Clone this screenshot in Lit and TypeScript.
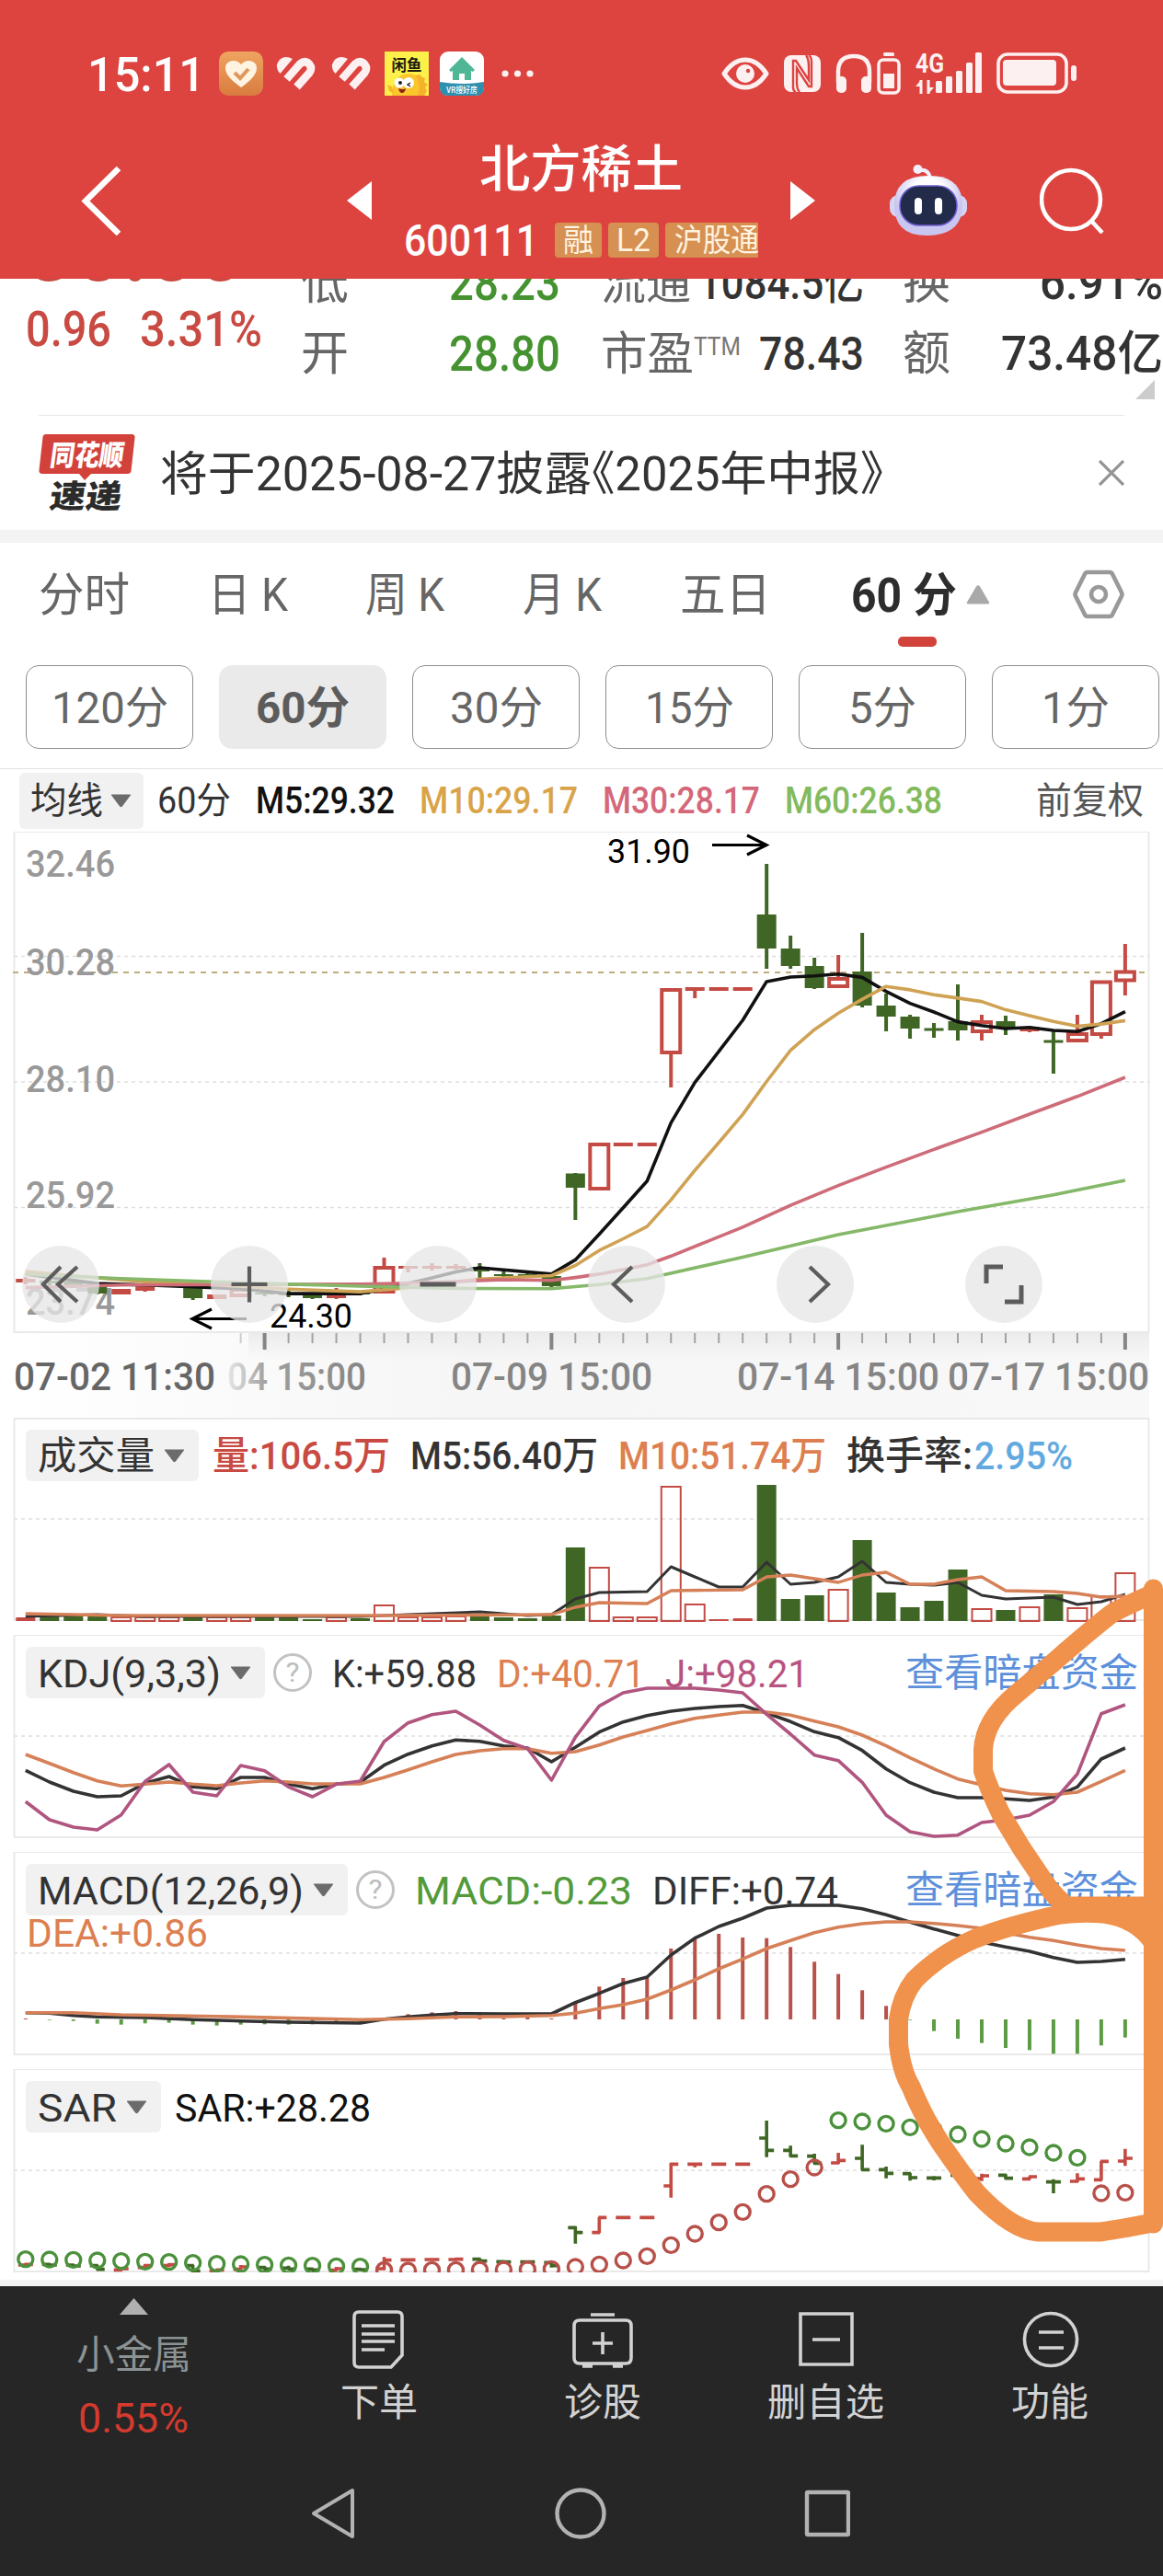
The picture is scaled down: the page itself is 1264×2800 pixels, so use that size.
import { LitElement, html, svg, css, nothing } from 'lit';
import { customElement } from 'lit/decorators.js';

const RED = '#c34b44';
const GREEN = '#3f6624';

// Horizontal position of candle i
const cx = (i: number) => 27.8 + 25.98 * i;

type Pt = [number, number];

// 'i:v' pairs separated by blanks
const parse = (s: string): Pt[] =>
    s.trim().split(/\s+/).map((p) => p.split(':').map(Number) as Pt);

// One value per candle
const dense = (s: string): Pt[] =>
    s.trim().split(/\s+/).map((v, i) => [i, Number(v)] as Pt);

const line = (pts: Pt[], y: (v: number) => number, color: string, width = 3.6) => svg`
    <polyline fill="none" stroke=${color} stroke-width=${width} stroke-linejoin="round"
        points=${pts.map(([i, v]) => `${cx(i).toFixed(1)},${y(v).toFixed(1)}`).join(' ')} />`;

// Text squeezed to the condensed width of the app's typeface
const fit = (text: string, width: number, size: number, cls = '') => html`
    <svg class="fit ${cls}" width=${width} height=${size}>
        <text x="0" y=${size * 0.86} font-size=${size} textLength=${width} lengthAdjust="spacingAndGlyphs">${text}</text>
    </svg>`;

const tx = (text: string, x: number, y: number, width: number, size: number, fill: string, weight = 400) => svg`
    <text x=${x} y=${y} font-size=${size} textLength=${width} lengthAdjust="spacingAndGlyphs"
        fill=${fill} font-weight=${weight}>${text}</text>`;

// color, body top, body bottom, high, low
type Candle = [string, number, number, number, number];
const candles: Candle[] = [
    ['r', 1390, 1394, 1388, 1396], ['g', 1392, 1395, 1390, 1398], ['g', 1393, 1397, 1391, 1399],
    ['g', 1396, 1406, 1394, 1407], ['r', 1401, 1407, 1401, 1407], ['r', 1397, 1403, 1394, 1404],
    ['r', 1392, 1395, 1390, 1396], ['g', 1399, 1411, 1398, 1413], ['r', 1407, 1412, 1407, 1412],
    ['r', 1401, 1409, 1400, 1409], ['g', 1405, 1407, 1403, 1409], ['g', 1405, 1408, 1403, 1410],
    ['g', 1407, 1411, 1405, 1412], ['r', 1406, 1411, 1400, 1412], ['g', 1405, 1407, 1404, 1408],
    ['r', 1377, 1405, 1367, 1405], ['r', 1376, 1379, 1376, 1383], ['r', 1376, 1379, 1373, 1381],
    ['r', 1376, 1379, 1374, 1380], ['g', 1377, 1382, 1373, 1390], ['g', 1385, 1387, 1382, 1388],
    ['g', 1385, 1387, 1384, 1388], ['g', 1387, 1398, 1385, 1399], ['g', 1275.5, 1291, 1275, 1326],
    ['r', 1243, 1293, 1243, 1293], ['r', 1242, 1246, 1242, 1246], ['r', 1242, 1246, 1242, 1246],
    ['r', 1075, 1145, 1075, 1182], ['r', 1073, 1077, 1073, 1085], ['r', 1073, 1077, 1073, 1077],
    ['r', 1073, 1077, 1073, 1077], ['g', 994, 1031, 939, 1053], ['g', 1031, 1050, 1017, 1053],
    ['g', 1050, 1074, 1041, 1075], ['r', 1063, 1073, 1038, 1073], ['g', 1056, 1093, 1014, 1095],
    ['g', 1093, 1105, 1080, 1121], ['g', 1105, 1118, 1103, 1129], ['g', 1117.5, 1120.5, 1112, 1128],
    ['g', 1110, 1120, 1070, 1131], ['r', 1110, 1122, 1103, 1131], ['g', 1110, 1117, 1104, 1125],
    ['r', 1116, 1121, 1116, 1122], ['g', 1130.5, 1133.5, 1120, 1167], ['r', 1123, 1132, 1103, 1132],
    ['r', 1066.5, 1125, 1066, 1129], ['r', 1055.5, 1066.5, 1026, 1082],
];

const py = (v: number) => 900 + v / 2.45;
const ma5 = parse(`0:1188 3:1213 5:1217 7:1222 9:1227 11:1240 14:1240 15:1228 17:1198 18:1182 19:1171 22:1188 23:1150
    24:1082 25:1011 26:940 27:785 28:678 29:595 30:512 31:409 32:397 33:394 34:389 35:398 36:435 37:467 38:490 39:516
    40:526 41:534 42:531 43:539 44:542 45:521 46:489`);
const ma10 = parse(`0:1181 3:1198 5:1208 8:1217 11:1228 14:1235 16:1224 19:1201 22:1192 23:1165 24:1125 25:1094 26:1061
    27:990 28:912 29:838 30:763 31:675 32:592 33:537 34:493 35:456 36:422 37:431 38:444 39:453 40:462 41:484 42:500
    43:515 44:528 45:522 46:513`);
const ma30 = parse('0:1224 4:1217 14:1215 16:1212 20:1203 22:1205 23:1197 24:1188 25:1176 26:1163 27:1140 30:1063 32:1005 34:952 36:903 38:856 40:810 42:762 44:715 46:664');
const ma60 = parse('0:1189 4:1200 10:1213 14:1220 18:1226 22:1227 24:1216 26:1200 30:1143 34:1083 39:1022 43:977 46:938');

const volTop = dense(`1758 1757 1757 1757 1757 1757 1757 1757 1757 1757 1757 1757 1760 1757 1759 1744 1757 1757 1756 1756
    1758 1759 1756 1682 1703 1757 1757 1615 1743 1760 1759 1614 1738 1734 1727 1674 1731 1747 1740 1706 1748 1750 1746
    1733 1747 1734 1709`);
const volMa5 = parse(`0:1757 3:1755 5:1757 14:1757 16:1755 19:1752 21:1756 22:1755 23:1738 24:1731 26:1730 27:1703
    28:1714 29:1725 30:1725 31:1698 32:1722 33:1720 34:1714 35:1697 36:1720 37:1722 38:1723 39:1720 40:1734 41:1738
    43:1736 44:1744 45:1741 46:1733`);
const volMa10 = parse(`0:1754 4:1756 15:1756 22:1755 23:1747 24:1742 26:1743 27:1729 30:1728 31:1714 32:1712 34:1720
    35:1712 36:1709 37:1722 38:1722 39:1717 40:1714 41:1729 43:1730 44:1732 45:1736 46:1735`);

const ky = (v: number) => 1530 + v / 3;
const kLine = dense(`1183 1221 1251 1269 1266 1225 1203 1237 1243 1206 1206 1228 1243 1228 1222 1166 1130 1103 1084 1088
    1103 1110 1155 1108 1058 1025 1004 990 981 975 971 996 1024 1057 1076 1118 1178 1223 1254 1272 1272 1276 1281 1270
    1237 1146 1110`);
const dLine = dense(`1131 1160 1190 1217 1234 1228 1221 1228 1233 1224 1217 1221 1227 1227 1227 1206 1181 1155 1131 1119
    1112 1112 1127 1122 1100 1074 1053 1031 1013 1003 993 993 1003 1022 1041 1068 1103 1142 1178 1211 1230 1248 1259
    1262 1254 1219 1183`);
const jLine = dense(`1285 1344 1368 1377 1328 1219 1164 1254 1266 1167 1184 1237 1269 1228 1218 1089 1028 1001 990 1035
    1085 1112 1215 1075 973 930 915 915 915 921 930 1000 1065 1133 1151 1222 1329 1383 1398 1394 1353 1344 1329 1285
    1195 998 969`);

const my = (v: number) => 2000 + v / 3;
const macdBars = dense(`582 587 590 599 602 598 596 602 605 602 601 602 601 598 596 580 568 562 558 562 581 575 582 530
    478 450 450 354 322 306 318 320 349 397 437 490 541 587 623 648 662 678 685 697 697 670 644`);
const diffLine = parse(`0:563 1:565 2:572 3:577 5:579 7:586 9:590 11:594 14:597 15:584 16:577 17:571 18:566 20:567 22:567
    23:530 24:500 25:468 26:447 27:375 28:320 29:282 30:255 31:222 32:213 34:213 35:224 36:244 37:268 38:290 39:311
    40:333 41:349 42:363 43:383 44:399 45:396 46:389`);
const deaLine = parse(`0:563 2:563 4:570 8:575 14:586 16:583 18:577 20:576 22:572 23:565 24:550 25:537 26:519 27:489
    28:456 29:420 30:388 31:354 32:328 33:302 34:284 35:273 36:267 37:267 38:272 39:279 40:288 41:303 42:317 43:328
    44:342 45:354 46:360`);

const sarDots = dense(`1367 1368 1369 1371 1373 1375 1376 1379 1382 1383 1385 1387 1388 1390 1391 1402 1404 1402 1402
    1401 1401 1400 1399 1392 1384 1371 1357 1321 1284 1247 1213 1154 1106 1068 914 918 925 937 945 960 975 990 1002
    1020 1036 1152 1150`);
const sarGreen = (i: number) => i < 15 || (i > 33 && i < 45);

// color, open, high, low, close
const ohlc: [string, number, number, number, number][] = [
    ['r', 1386, 1380, 1390, 1384], ['g', 1384, 1382, 1390, 1386], ['g', 1386, 1384, 1392, 1389],
    ['g', 1388, 1386, 1402, 1400], ['r', 1402, 1396, 1404, 1398], ['r', 1394, 1382, 1396, 1388],
    ['r', 1388, 1380, 1392, 1385], ['g', 1388, 1386, 1410, 1406], ['r', 1405, 1400, 1408, 1402],
    ['r', 1400, 1386, 1402, 1392], ['g', 1394, 1390, 1402, 1399], ['g', 1396, 1388, 1402, 1399],
    ['g', 1399, 1397, 1405, 1402], ['r', 1403, 1392, 1405, 1398], ['g', 1400, 1397, 1404, 1401],
    ['r', 1398, 1360, 1402, 1370], ['r', 1369, 1367, 1372, 1369], ['r', 1368, 1366, 1372, 1368],
    ['r', 1368, 1366, 1370, 1367], ['g', 1367, 1364, 1380, 1373], ['g', 1375, 1373, 1378, 1376],
    ['g', 1376, 1374, 1378, 1376], ['g', 1378, 1376, 1394, 1388], ['g', 1264, 1260, 1316, 1280],
    ['r', 1280, 1230, 1281, 1231], ['r', 1231, 1230, 1232, 1231], ['r', 1231, 1230, 1232, 1231],
    ['r', 1128, 1053, 1166, 1057], ['r', 1057, 1055, 1067, 1057], ['r', 1057, 1056, 1058, 1057],
    ['r', 1057, 1056, 1058, 1057], ['g', 972, 915, 1034, 1012], ['g', 1012, 997, 1033, 1030],
    ['g', 1031, 1023, 1056, 1054], ['r', 1053, 1020, 1056, 1045], ['g', 1038, 994, 1077, 1075],
    ['g', 1075, 1065, 1103, 1087], ['g', 1088, 1086, 1111, 1101], ['g', 1102, 1096, 1110, 1102],
    ['g', 1093, 1058, 1112, 1101], ['r', 1104, 1088, 1112, 1095], ['g', 1093, 1090, 1106, 1103],
    ['r', 1105, 1098, 1106, 1098], ['g', 1115, 1106, 1152, 1115], ['r', 1113, 1087, 1116, 1105],
    ['r', 1108, 1047, 1110, 1048], ['r', 1047, 1007, 1063, 1038],
];

const downTri = svg`<path d="M0.5 0.5h20q1 0 .4 1l-9 12q-1.4 1.6-2.8 0l-9-12q-.6-1 .4-1z" fill="#6b6b6b" />`;

const frame = (top: number, bottom: number) => svg`
    <rect x="15.5" y=${top + 1} width="1233" height=${bottom - top} fill="none" stroke="#e9e9e9" stroke-width="2" />`;

const grid = (y: number) => svg`
    <path d="M15 ${y}H1249" stroke="#e6e6e6" stroke-width="2" stroke-dasharray="4 4" />`;

const heartLogo = html`
    <svg width="48" height="48" viewBox="0 0 48 48">
        <path d="M6.5 24Q0 17 5 10q6-7 15-2z" fill="#fdf0f0" />
        <path d="M13.500 30L28 13.500q5.500-4.500 10 0 4 5 0 10L24.500 38.500" fill="none" stroke="#fdf0f0" stroke-width="8.600" />
    </svg>`;

@customElement('app-root')
export class AppRoot extends LitElement {
    static styles = css`
        :host {
            display: block;
            position: relative;
            width: 1264px;
            height: 2800px;
            overflow: hidden;
            background: #fff;
            color: #333;
            font-family: Roboto, 'Noto Sans CJK SC', sans-serif;
        }
        svg { display: block; flex: none; }
        svg text { font-family: Roboto, 'Noto Sans CJK SC', sans-serif; white-space: pre; }
        .fit { overflow: visible; fill: currentColor; }
        .medium { font-weight: 500; }
        .bold { font-weight: 700; }
        .half { font-feature-settings: 'halt'; }
        .red { color: #c84a42; }
        .green { color: #459230; }
        .gray { color: #666; }
        .black { color: #111; }
        .gold { color: #d9a449; }
        .pink { color: #d4687a; }
        .lime { color: #83ba5c; }
        .orange { color: #dd7f50; }
        .purple { color: #b8527f; }
        .sky { color: #62a9e0; }
        .link { color: #5d90db; margin: 0 -1px 0 auto; }
        .leaf { color: #539a3a; }

        .header { height: 303px; background: #dd433f; color: #fff; }
        .status { display: flex; justify-content: space-between; align-items: center; height: 145px; padding: 0 94px 0 98px; box-sizing: border-box; }
        .apps { display: flex; align-items: center; gap: 12px; padding-top: 15px; }
        .time { margin: 0 3px 0 -3px; }
        .signals { display: flex; align-items: center; gap: 16px; padding-top: 14px; }
        .nav { display: flex; align-items: center; height: 145px; padding-left: 86px; }
        .prev { margin-left: 239px; }
        .names { display: flex; flex-direction: column; align-items: center; gap: 31px; width: 385px; margin: 0 35px; }
        .code { display: flex; align-items: center; height: 38px; width: 385px; overflow: hidden; gap: 7px; }
        .code .num { margin-right: 11px; }
        .badge { display: flex; flex: none; align-items: center; justify-content: center; height: 38px; border-radius: 4px; background: #d69052; color: #fff3e0; }
        .w51 { width: 51px; }
        .w55 { width: 55px; }
        .w110 { width: 110px; justify-content: flex-start; padding-left: 10px; box-sizing: border-box; }
        .robot { margin-left: 81px; }
        .search { margin-left: 79px; }

        .quote { position: relative; display: grid; grid-template-columns: 257px 284px 286px 283px; column-gap: 42px; height: 148px; padding-left: 28px; box-sizing: border-box; overflow: hidden; }
        .price { display: flex; flex-direction: column; gap: 11px; margin-top: -82px; }
        .change { display: flex; justify-content: space-between; }
        .pair { margin-top: -35px; }
        .cell { display: flex; align-items: center; height: 77px; }
        .cell .value { margin-left: auto; }
        .cell .green { margin-right: 2px; }
        .corner { position: absolute; right: 9px; bottom: 17px; }

        .news { display: flex; align-items: center; height: 125px; margin: 0 42px; border-top: 1px solid #e8e8e8; box-sizing: border-box; }
        .news .msg { display: flex; margin-left: 27px; }
        .news .close { margin-left: auto; }
        .band { height: 14px; background: #f3f3f3; }

        .tabs { display: flex; align-items: center; justify-content: space-between; height: 112px; padding: 0 42px 0 42px; }
        .current { position: relative; display: flex; align-items: center; color: #2d2d2d; margin: 0 5px 0 3px; }
        .current .up { margin-left: 10px; }
        .current::after { content: ''; position: absolute; left: 51px; top: 71px; width: 42px; height: 11px; border-radius: 5px; background: #d2433b; }
        .periods { display: flex; gap: 28px; padding: 21px 0 21px 28px; border-bottom: 1px solid #e2e2e2; }
        .period { display: flex; flex: none; align-items: center; justify-content: center; width: 182px; height: 91px; box-sizing: border-box; border: 1px solid #8e8e8e; border-radius: 14px; color: #666; }
        .period.on { background: #eaeaea; border-color: #eaeaea; color: #5c5c5c; }

        .avg { display: flex; align-items: center; gap: 27px; height: 68px; padding: 0 21px; box-sizing: border-box; }
        .avg .chip { height: 61px; gap: 9px; padding: 0 14px 0 12px; margin-right: -12px; }
        .avg .adj { margin-left: auto; color: #555; }
        .chip { display: flex; flex: none; align-items: center; gap: 11px; height: 56px; padding: 0 16px 0 13px; border-radius: 6px; background: #f1f1f1; box-sizing: border-box; }
        .main { position: relative; height: 637px; }
        .controls { position: absolute; left: 24px; top: 450px; display: flex; gap: 121px; }
        .round { width: 84px; height: 84px; border-radius: 50%; background: rgba(230, 230, 230, 0.76); }
        .panel { display: grid; height: 236px; }
        .panel > svg, .panel > .legends { grid-area: 1 / 1; }
        .panel:last-of-type { height: 229px; }
        .legends { padding: 13px 28px 0; z-index: 1; }
        .legend { display: flex; align-items: center; gap: 22px; height: 56px; }
        .legend .chip { margin-right: -7px; }
        .legend .help { margin-left: -6px; }
        .tight { margin-left: -20px; }
        .second { margin-top: -3px; padding-left: 1px; }

        .footer { height: 322px; border-top: 7px solid #f3f3f3; box-sizing: border-box; background: #262626; color: #d2d2d2; }
        .actions { display: flex; }
        .action { display: flex; flex-direction: column; align-items: center; width: 243px; height: 190px; padding-top: 26px; box-sizing: border-box; gap: 15px; }
        .sector { width: 290px; padding-top: 13px; gap: 22px; }
        .sector .name { color: #8a9294; }
        .sector .pct { color: #d43a2e; margin-top: 4px; }
        .keys { display: flex; justify-content: space-between; padding: 28px 340px 0 337px; }
        .marks { position: absolute; left: 0; top: 0; z-index: 2; }
    `;

    private renderHeader() {
        return html`
            <div class="header">
                <div class="status">
                    <div class="apps">
                        <div class="time">${fit('15:11', 128, 52, 'medium')}</div>
                        <svg width="48" height="48" viewBox="0 0 48 48">
                            <defs>
                                <linearGradient id="warm" x2="0" y2="1"><stop stop-color="#eea560" /><stop offset="1" stop-color="#da7b40" /></linearGradient>
                            </defs>
                            <rect width="48" height="48" rx="10" fill="url(#warm)" />
                            <path d="M24 39C14 32 7 25 7 18c0-8 11-11 17-4 6-7 17-4 17 4 0 7-7 14-17 21z" fill="#fff3e2" />
                            <path d="M17 23l6 6 9-10" fill="none" stroke="#e0985a" stroke-width="4" />
                        </svg>
                        ${heartLogo} ${heartLogo}
                        <svg width="48" height="48" viewBox="0 0 48 48">
                            <rect width="48" height="48" fill="#fdf04a" />
                            <path d="M8 48Q8 24 27 24L40 27 44 48z" fill="#fbc52c" />
                            <path d="M3 36l5 2 2 8-5-3z" fill="#f9b52a" />
                            <path d="M38 25l3 3 3 1-1 4 4 3-3 3 2 4-3 5h-7q4-12-2-22z" fill="#f5b32b" />
                            <circle cx="16" cy="34" r="5.500" fill="#fff" /><circle cx="26" cy="34" r="6" fill="#fff" />
                            <circle cx="17" cy="34" r="2" fill="#222" /><path d="M28 34l-3 2 3 2" stroke="#222" fill="none" stroke-width="1.500" />
                            <path d="M15 40q5 2 8 0-1 5-4 5t-4-5z" fill="#8a2417" />
                            ${tx('闲鱼', 7.5, 20.5, 33, 17, '#1b1b10', 700)}
                        </svg>
                        <svg width="48" height="48" viewBox="0 0 48 48">
                            <rect width="48" height="48" rx="9" fill="#fff" />
                            <path d="M0 33Q24 37 48 33v6q0 9-9 9H9q-9 0-9-9z" fill="#2f8fae" />
                            <path d="M24 6L10 20l2 2 2-1v10h7v-7h6v7h7V21l2 1 2-2z" fill="#4fb795" />
                            ${tx('VR搜好房', 7, 45, 34, 9, '#fff', 500)}
                        </svg>
                        <svg width="48" height="48" fill="#fdf0f0"><circle cx="11" cy="24" r="3.600" /><circle cx="24.500" cy="24" r="3.600" /><circle cx="38" cy="24" r="3.600" /></svg>
                    </div>
                    <div class="signals">
                        <svg width="52" height="48" viewBox="0 0 52 48" fill="#fdf0f0">
                            <path d="M3 24Q13 9 26 9t23 15Q39 39 26 39T3 24z" fill="none" stroke="#fdf0f0" stroke-width="5" stroke-linejoin="round" />
                            <circle cx="26" cy="24" r="10" /><circle cx="29" cy="21" r="2.200" fill="#dd433f" />
                        </svg>
                        <svg width="40" height="48" viewBox="0 0 40 48">
                            <rect y="4" width="40" height="40" rx="8" fill="#fdf0f0" />
                            <path d="M13 44q-3-1-3-5V10h3l14 21V16q0-8-3-12" fill="none" stroke="#dd433f" stroke-width="2.400" />
                            <path d="M27 4q3 2 3 7v27h-3L14 18v16q0 7 3 10" fill="none" stroke="#dd433f" stroke-width="2.400" />
                        </svg>
                        <svg width="71" height="48" viewBox="0 0 71 48" fill="#fdf0f0">
                            <path d="M3 34V22Q3 5 20 5t17 17v12" fill="none" stroke="#fdf0f0" stroke-width="4.500" />
                            <rect x="1" y="27" width="11" height="18" rx="5" /><rect x="28" y="27" width="11" height="18" rx="5" />
                            <rect x="52" y="1" width="12" height="4" rx="1.500" />
                            <rect x="47" y="9" width="22" height="36" rx="5" fill="none" stroke="#fdf0f0" stroke-width="3.500" />
                            <rect x="52" y="24" width="12" height="16" />
                        </svg>
                        <svg width="72" height="48" viewBox="0 0 72 48" fill="#fdf0f0">
                            ${tx('4G', 0, 22.500, 31, 30, '#fdf0f0', 700)}
                            <path d="M6 31v15M14 31v15" stroke="#fdf0f0" stroke-width="3" /><path d="M0 38l6-7v7zM14 46v-7h6z" />
                            <rect x="22" y="32" width="7" height="13" rx="1.500" /><rect x="33" y="27" width="7" height="18" rx="1.500" />
                            <rect x="44" y="21" width="7" height="24" rx="1.500" /><rect x="55" y="12" width="7" height="33" rx="1.500" />
                            <rect x="65" y="1" width="7" height="44" rx="1.500" />
                        </svg>
                        <svg width="87" height="48" viewBox="0 0 87 48">
                            <rect x="2" y="3" width="74" height="41" rx="10" fill="none" stroke="#fdf0f0" stroke-width="3.600" />
                            <rect x="7" y="9" width="58" height="28" rx="4" fill="#fdf0f0" /><rect x="81" y="15" width="6" height="17" rx="3" fill="#fdf0f0" />
                        </svg>
                    </div>
                </div>
                <div class="nav">
                    <svg width="52" height="84"><path d="M43 7L7 42.500 43 78" fill="none" stroke="#fff" stroke-width="6.500" /></svg>
                    <svg class="prev" width="27" height="42" fill="#fff"><path d="M0 21L27 0v42z" /></svg>
                    <div class="names">
                        ${fit('北方稀土', 221, 55, 'medium')}
                        <div class="code">
                            <div class="num">${fit('600111', 146, 48, 'medium')}</div>
                            <div class="badge w51">${fit('融', 33, 34)}</div>
                            <div class="badge w55">${fit('L2', 37, 35)}</div>
                            <div class="badge w110">${fit('沪股通', 92, 34)}</div>
                        </div>
                    </div>
                    <svg width="27" height="42" fill="#fff"><path d="M27 21L0 0v42z" /></svg>
                    <svg class="robot" width="84" height="78" viewBox="0 0 84 78">
                        <defs>
                            <radialGradient id="shell" cy=".3"><stop offset=".5" stop-color="#fff" /><stop offset="1" stop-color="#c9c6f0" /></radialGradient>
                        </defs>
                        <path d="M31 6q11-2 13 8" fill="none" stroke="#f1ecfa" stroke-width="4" />
                        <circle cx="30.500" cy="5" r="5" fill="#f3efff" />
                        <rect y="33" width="84" height="24" rx="9" fill="#d7d4f3" />
                        <path d="M5 44Q5 12 42 12t37 32-37 33T5 44z" fill="url(#shell)" />
                        <rect x="11" y="23" width="62" height="43" rx="21" fill="#222b4a" stroke="#6d5ed0" stroke-width="1.500" />
                        <rect x="27" y="36" width="8" height="18" rx="4" fill="#fff" /><rect x="49" y="36" width="8" height="18" rx="4" fill="#fff" />
                    </svg>
                    <svg class="search" width="72" height="72" fill="none" stroke="#fff" stroke-width="4.500"><circle cx="34" cy="35" r="32" /><path d="M56 58l12 13" /></svg>
                </div>
            </div>`;
    }

    private renderQuote() {
        return html`
            <div class="quote">
                <div class="price red">
                    ${fit('30.00', 238, 98, 'bold')}
                    <div class="change">${fit('0.96', 93, 53, 'medium')} ${fit('3.31%', 133, 53, 'medium')}</div>
                </div>
                <div class="pair">
                    <div class="cell"><div class="gray">${fit('低', 52, 51)}</div><div class="value green">${fit('28.23', 121, 53, 'medium')}</div></div>
                    <div class="cell"><div class="gray">${fit('开', 52, 51)}</div><div class="value green">${fit('28.80', 121, 53, 'medium')}</div></div>
                </div>
                <div class="pair">
                    <div class="cell"><div class="gray">${fit('流通', 98, 50)}</div><div class="value">${fit('1084.5亿', 180, 50, 'medium')}</div></div>
                    <div class="cell">
                        <div class="gray">${fit('市盈', 101, 50)}</div>
                        <svg width="54" height="48">${tx('TTM', 0, 25.500, 51, 27, '#777')}</svg>
                        <div class="value">${fit('78.43', 114, 50, 'medium')}</div>
                    </div>
                </div>
                <div class="pair">
                    <div class="cell"><div class="gray">${fit('换', 52, 51)}</div><div class="value">${fit('6.91%', 134, 51, 'medium')}</div></div>
                    <div class="cell"><div class="gray">${fit('额', 52, 51)}</div><div class="value">${fit('73.48亿', 176, 51, 'medium')}</div></div>
                </div>
                <svg class="corner" width="21" height="21"><path d="M0 21L21 0v21z" fill="#ccc" /></svg>
            </div>
            <div class="news">
                <svg width="105" height="84" viewBox="0 0 105 84">
                    <path d="M8 0h93q4 0 3.500 4l-4 36q-.5 3-4 3H57l-7 7-6-7H4q-4 0-3.500-4l4-36Q5 0 8 0z" fill="#d2423b" />
                    <g transform="skewX(-8)">
                        ${tx('同花顺', 16, 34, 80, 31, '#fff', 900)}
                        ${tx('速递', 22, 80, 78, 35, '#2b2b2b', 900)}
                    </g>
                </svg>
                <div class="msg">${fit('将于2025-08-27披露', 469, 51)}${fit('《2025年中报》', 317, 51, 'half')}</div>
                <svg class="close" width="28" height="28"><path d="M1 1l26 26M27 1L1 27" stroke="#949494" stroke-width="3.200" /></svg>
            </div>
            <div class="band"></div>`;
    }

    private renderTabs() {
        const tabs: [string, number][] = [['分时', 99], ['日 K', 87], ['周 K', 86], ['月 K', 86], ['五日', 99]];
        const periods: [string, number][] = [['120分', 127], ['60分', 102], ['30分', 101], ['15分', 97], ['5分', 74], ['1分', 74]];
        return html`
            <div class="tabs">
                ${tabs.map(([t, w]) => html`<div class="gray">${fit(t, w, 50)}</div>`)}
                <div class="current">
                    ${fit('60 分', 115, 51, 'bold')}
                    <svg class="up" width="26" height="21"><path d="M11 1.500q2-2.500 4 0l10 17q.5 2-1 2H2q-2 0-1-2z" fill="#a9a9a9" /></svg>
                </div>
                <svg width="56" height="54" fill="none" stroke="#999" stroke-width="4.600" stroke-linejoin="round">
                    <path d="M16 3h24q2 0 3 2l10 20q1 2 0 4L43 49q-1 2-3 2H16q-2 0-3-2L3 29q-1-2 0-4L13 5q1-2 3-2z" />
                    <circle cx="28" cy="27" r="8" />
                </svg>
            </div>
            <div class="periods">
                ${periods.map(([t, w], i) => html`<div class="period ${i === 1 ? 'on' : ''}">${fit(t, w, 48, i === 1 ? 'bold' : '')}</div>`)}
            </div>`;
    }

    private chip(text: string, width: number, size = 43) {
        return html`<div class="chip">${fit(text, width, size)}<svg width="21" height="15">${downTri}</svg></div>`;
    }

    private renderMain() {
        const icons = [
            svg`<path d="M42 23L23 42l19 19M60 23L39 42l21 19" />`,
            svg`<path d="M42 22.500v39M22.500 42h39" />`,
            svg`<path d="M22.500 42h39" stroke-width="5" />`,
            svg`<path d="M48 23L28 42l20 19" />`,
            svg`<path d="M36 23l20 19-20 19" />`,
            svg`<path d="M23 41V23h18M61 43v18H43" stroke-width="5" />`,
        ];
        return html`
            <div class="avg">
                ${this.chip('均线', 79, 40)}
                ${fit('60分', 80, 40)}
                <div class="black">${fit('M5:29.32', 151, 40, 'medium')}</div>
                <div class="gold">${fit('M10:29.17', 172, 40, 'medium')}</div>
                <div class="pink">${fit('M30:28.17', 171, 40, 'medium')}</div>
                <div class="lime">${fit('M60:26.38', 171, 40, 'medium')}</div>
                <div class="adj">${fit('前复权', 117, 40)}</div>
            </div>
            <div class="main">
                <svg width="1264" height="637" viewBox="0 904 1264 637">
                    <defs>
                        <linearGradient id="fade"><stop stop-color="#f5f5f5" stop-opacity="0" /><stop offset=".4" stop-color="#f6f6f6" /><stop offset="1" stop-color="#f8f8f8" /></linearGradient>
                        <linearGradient id="shade" x2="0" y2="1"><stop stop-color="#ececec" /><stop offset=".5" stop-color="#ececec" stop-opacity="0" /></linearGradient>
                        <linearGradient id="ink"><stop stop-color="#e6e6e6" /><stop offset=".28" stop-color="#a0a0a0" /><stop offset="1" stop-color="#858585" /></linearGradient>
                    </defs>
                    <rect x="20" y="1449" width="1229" height="97" fill="url(#fade)" />
                    <rect x="270" y="1449" width="979" height="60" fill="url(#shade)" />
                    ${frame(903, 1447)}
                    ${[1039.5, 1176, 1312.5].map((y) => svg`<path d="M15 ${y}H1249" stroke="#dedede" stroke-width="1.3" stroke-dasharray="4 4" />`)}
                    <path d="M14 1057H1246" stroke="#bfab7e" stroke-width="2" stroke-dasharray="6 6" />
                    ${([['32.46', 953], ['30.28', 1060], ['28.10', 1187], ['25.92', 1313], ['23.74', 1429]] as [string, number][]).map(
                        ([t, y]) => tx(t, 28, y, 97, 41, '#999', 500)
                    )}
                    ${candles.map(([c, top, bottom, high, low], i) => {
                        const x = cx(i);
                        const color = c === 'r' ? RED : GREEN;
                        const hollow = c === 'r' && bottom - top > 7;
                        const box = hollow
                            ? svg`<rect x=${x - 10} y=${top + 1} width="20" height=${bottom - top - 2} fill="#fff" stroke=${color} stroke-width="4" />`
                            : svg`<rect x=${x - 10.5} y=${top} width="21" height=${bottom - top} fill=${color} />`;
                        return svg`<path d="M${x} ${high}V${low}" stroke=${color} stroke-width="4" />${box}`;
                    })}
                    ${line(ma5, py, '#111')} ${line(ma10, py, '#cfa254')} ${line(ma30, py, '#ce6c78')} ${line(ma60, py, '#85b868')}
                    ${tx('31.90', 660, 938, 90, 36, '#000')}
                    ${tx('24.30', 293, 1443, 90, 36, '#000')}
                    <path d="M774 918.500h59M812 908l21 10.500-21 10.500M268 1433.500h-59M230 1423l-21 10.500 21 10.500" fill="none" stroke="#000" stroke-width="3.200" />
                    ${Array.from({ length: 38 }, (_, k) => k + 9).map((i) => {
                        const major = (i - 10) % 12 === 0;
                        return svg`<path d="M${cx(i)} 1449V${major ? 1467 : 1460}" stroke=${i === 9 ? '#ccc' : major ? '#858585' : '#a2a2a2'} stroke-width=${major ? 4 : 2} />`;
                    })}
                    ${tx('07-02 11:30', 15, 1511, 219, 42, '#666', 500)}
                    ${tx('04 15:00', 247, 1511, 151, 42, 'url(#ink)', 500)}
                    ${tx('07-09 15:00', 490, 1511, 219, 42, '#858585', 500)}
                    ${tx('07-14 15:00', 801, 1511, 220, 42, '#858585', 500)}
                    ${tx('07-17 15:00', 1030, 1511, 219, 42, '#858585', 500)}
                </svg>
                <div class="controls">
                    ${icons.map((icon) => html`<div class="round"><svg width="84" height="84" fill="none" stroke="#5c5c5c" stroke-width="4.200">${icon}</svg></div>`)}
                </div>
            </div>`;
    }

    private help() {
        return html`
            <svg class="help" width="42" height="42">
                <circle cx="21" cy="21" r="19.500" fill="none" stroke="#c2c2c2" stroke-width="3" />
                ${tx('?', 13.5, 31, 15, 29, '#bdbdbd')}
            </svg>`;
    }

    private renderPanels() {
        return html`
            <div class="panel">
                <svg width="1264" height="236" viewBox="0 1541 1264 236">
                    ${frame(1541, 1760)} ${grid(1651)}
                    ${volTop.map(([i, y]) => {
                        const x = cx(i);
                        return candles[i][0] === 'r' && y < 1758
                            ? svg`<rect x=${x - 10.5} y=${y + 1} width="21" height=${1761 - y} fill="none" stroke=${RED} stroke-width="2" />`
                            : svg`<rect x=${x - 10.5} y=${y} width="21" height=${1762 - y} fill=${candles[i][0] === 'r' ? RED : GREEN} />`;
                    })}
                    ${line(volMa5, (v) => v, '#333', 3)} ${line(volMa10, (v) => v, '#d68058', 3.4)}
                </svg>
                <div class="legends">
                    <div class="legend">
                        ${this.chip('成交量', 127, 42)}
                        <div class="red">${fit('量:106.5万', 193, 42, 'medium')}</div>
                        ${fit('M5:56.40万', 204, 42, 'medium')}
                        <div class="orange">${fit('M10:51.74万', 226, 42, 'medium')}</div>
                        ${fit('换手率:', 137, 42, 'medium')}
                        <div class="sky tight">${fit('2.95%', 107, 42, 'medium')}</div>
                    </div>
                </div>
            </div>
            <div class="panel">
                <svg width="1264" height="236" viewBox="0 1777 1264 236">
                    ${frame(1776, 1996)} ${grid(1887)}
                    ${line(kLine, ky, '#333')} ${line(dLine, ky, '#d68058')} ${line(jLine, ky, '#b0557f')}
                </svg>
                <div class="legends">
                    <div class="legend">
                        ${this.chip('KDJ(9,3,3)', 199)} ${this.help()}
                        ${fit('K:+59.88', 157, 43)}
                        <div class="orange">${fit('D:+40.71', 161, 43)}</div>
                        <div class="purple">${fit('J:+98.21', 156, 43)}</div>
                        <div class="link">${fit('查看暗盘资金', 253, 42)}</div>
                    </div>
                </div>
            </div>
            <div class="panel">
                <svg width="1264" height="236" viewBox="0 2013 1264 236">
                    ${frame(2012, 2232)} ${grid(2123)}
                    ${macdBars.map(([i, v]) => svg`
                        <path d="M${cx(i)} 2195V${my(v)}" stroke=${v < 585 ? '#b8524b' : '#5d9b46'} stroke-width="4" />`)}
                    ${line(diffLine, my, '#333')} ${line(deaLine, my, '#d68058')}
                </svg>
                <div class="legends">
                    <div class="legend">
                        ${this.chip('MACD(12,26,9)', 289)} ${this.help()}
                        <div class="leaf">${fit('MACD:-0.23', 236, 43)}</div>
                        ${fit('DIFF:+0.74', 202, 43)}
                        <div class="link">${fit('查看暗盘资金', 253, 42)}</div>
                    </div>
                    <div class="orange second">${fit('DEA:+0.86', 197, 43)}</div>
                </div>
            </div>
            <div class="panel">
                <svg width="1264" height="229" viewBox="0 2249 1264 229">
                    <defs><clipPath id="box"><rect x="10" y="2249" width="1244" height="221" /></clipPath></defs>
                    ${frame(2248, 2468)} ${grid(2359)}
                    <g clip-path="url(#box)" fill="none">
                        ${ohlc.map(([c, o, h, l, e], i) => {
                            const x = cx(i);
                            return svg`<path d="M${x} ${my(h)}V${my(l)}M${x - 8} ${my(o)}H${x + 1}M${x - 1} ${my(e)}H${x + 8}"
                                stroke=${c === 'r' ? RED : GREEN} stroke-width="3.600" />`;
                        })}
                        ${sarDots.map(([i, v]) => svg`
                            <circle cx=${cx(i)} cy=${my(v)} r="8" stroke=${sarGreen(i) ? '#4b913b' : '#b8504a'} stroke-width="3.400" />`)}
                    </g>
                </svg>
                <div class="legends">
                    <div class="legend">
                        ${this.chip('SAR', 86)}
                        <div class="black">${fit('SAR:+28.28', 213, 43)}</div>
                    </div>
                </div>
            </div>`;
    }

    private renderFooter() {
        const items: [string, number, unknown][] = [
            ['下单', 84, svg`<path d="M9 2h42q5 0 5 5v42L44 62H9q-5 0-5-5V7q0-5 5-5z" /><path d="M12 17h36M12 26h36M12 34h36M12 43h25" />`],
            ['诊股', 84, svg`<path d="M18 5h26M6 11h50q6 0 6 6v35q0 6-6 6H6q-6 0-6-6V17q0-6 6-6zM31 24v24M20 36h22M9 61h11M42 61h11" />`],
            ['删自选', 127, svg`<path d="M3 4h56v55H3zM16 32h30" />`],
            ['功能', 84, svg`<circle cx="32" cy="32" r="28.500" /><path d="M19 24h27M19 41h27" />`],
        ];
        return html`
            <div class="footer">
                <div class="actions">
                    <div class="action sector">
                        <svg width="31" height="18"><path d="M15.500 0L31 18H0z" fill="#b0b0b0" /></svg>
                        <div class="name">${fit('小金属', 125, 42)}</div>
                        <div class="pct">${fit('0.55%', 120, 44)}</div>
                    </div>
                    ${items.map(([t, w, icon]) => html`
                        <div class="action">
                            <svg width="62" height="64" overflow="visible" fill="none" stroke="#d2d2d2" stroke-width="3.600">${icon ?? nothing}</svg>
                            ${fit(t, w, 42)}
                        </div>`)}
                </div>
                <div class="keys">
                    <svg width="50" height="58" fill="none" stroke="#b2b2b2" stroke-width="4" stroke-linejoin="round"><path d="M4 29L46 4v50z" /></svg>
                    <svg width="58" height="58" fill="none" stroke="#b2b2b2" stroke-width="4.400"><circle cx="29" cy="29" r="25.500" /></svg>
                    <svg width="50" height="58" fill="none" stroke="#b2b2b2" stroke-width="4.400"><rect x="3" y="6" width="45" height="46" rx="1" /></svg>
                </div>
            </div>`;
    }

    // Freehand marker strokes over the indicator panels
    private renderMarks() {
        return html`
            <svg class="marks" width="1264" height="2800" fill="none" stroke="#f0914c" stroke-width="21" stroke-linecap="round" stroke-linejoin="round">
                <path d="M1253.500 1727V2417" />
                <path d="M1252 1733Q1222 1746 1208 1754Q1180 1776 1146 1806Q1118 1830 1106 1840Q1070 1869 1068.500 1902V1925Q1075 1945 1088 1972Q1100 1992 1111 2010L1136 2047Q1148 2064 1160 2072H1253" />
                <path d="M1254 2112Q1236 2085 1200 2080Q1176 2078 1152 2081Q1096 2093 1058 2108Q1022 2124 994 2152Q980 2170 976.500 2195V2222Q980 2252 990 2268Q1003 2300 1022 2329Q1046 2364 1062 2384Q1100 2424 1128 2426H1196Q1222 2422 1232 2420L1253 2416" />
                <path d="M1215 2081L1250 2086l4 14" />
            </svg>`;
    }

    render() {
        return html`
            ${this.renderHeader()} ${this.renderQuote()} ${this.renderTabs()}
            ${this.renderMain()} <div>${this.renderPanels()}</div>
            ${this.renderFooter()} ${this.renderMarks()}
        `;
    }
}
